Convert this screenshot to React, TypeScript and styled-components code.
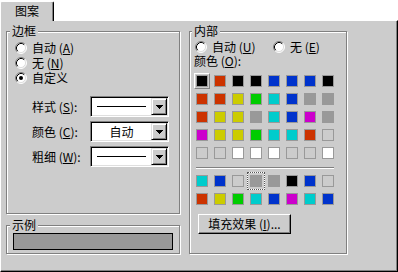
import React from 'react';
import styled, { createGlobalStyle } from 'styled-components';

const FACE = '#cccccc';

const GlobalStyle = createGlobalStyle`
  html, body { margin: 0; padding: 0; background: #fff; }
  body {
    font-family: "Noto Sans CJK SC", "Noto Sans", sans-serif;
    font-size: 12px;
    color: #000;
  }
  * { box-sizing: border-box; }
`;

const Dialog = styled.div`
  width: 398px;
  height: 272px;
  display: flex;
  flex-direction: column;
`;

const TabStrip = styled.div`
  height: 20px;
  padding-top: 1px;
  display: flex;
  align-items: flex-start;
`;

const Tab = styled.div`
  position: relative;
  z-index: 1;
  width: 54px;
  height: 20px;
  margin-bottom: -1px;
  background: ${FACE};
  border-left: 1px solid #fff;
  border-top: 1px solid #fff;
  border-right: 1px solid #000;
  border-top-left-radius: 2px;
  border-top-right-radius: 2px;
  box-shadow: inset -1px 0 0 #808080;
  padding-left: 14px;
  line-height: 17px;
`;

const Panel = styled.div`
  flex: 1;
  background: ${FACE};
  border-top: 1px solid #fff;
  border-left: 1px solid #fff;
  border-right: 1px solid #000;
  border-bottom: 1px solid #000;
  box-shadow: inset -1px -1px 0 #808080;
  padding: 10px 0 0 5px;
  display: flex;
  align-items: flex-start;
  gap: 9px;
`;

const Column = styled.div`
  width: 174px;
  display: flex;
  flex-direction: column;
  gap: 11px;
`;

const Group = styled.div<{ $h: number; $w?: number }>`
  position: relative;
  height: ${(p) => p.$h}px;
  width: ${(p) => (p.$w ? `${p.$w}px` : '100%')};
  border: 1px solid #808080;
  box-shadow: inset 1px 1px 0 #fff, 1px 1px 0 #fff;
  display: flex;
  flex-direction: column;
  align-items: flex-start;
`;

const Legend = styled.span<{ $left: number }>`
  position: absolute;
  top: -8px;
  left: ${(p) => p.$left}px;
  padding: 0 2px;
  background: ${FACE};
  line-height: 14px;
`;

const Key = styled.u`
  text-decoration: underline;
`;

const RadioList = styled.div`
  display: flex;
  flex-direction: column;
  padding: 8px 0 0 8px;
`;

const RadioRowLine = styled.div`
  display: flex;
  padding: 7px 0 0 5px;
`;

const RadioItem = styled.div<{ $w?: number }>`
  display: flex;
  align-items: center;
  gap: 5px;
  height: 15px;
  line-height: 15px;
  width: ${(p) => (p.$w ? `${p.$w}px` : 'auto')};
  white-space: nowrap;
`;

const FormRows = styled.div`
  display: flex;
  flex-direction: column;
  gap: 4px;
  margin-top: 11px;
  padding-left: 25px;
`;

const FormRow = styled.div`
  display: flex;
  align-items: center;
`;

const FieldLabel = styled.span`
  width: 58px;
  line-height: 14px;
  white-space: nowrap;
`;

const Combo = styled.div`
  width: 79px;
  height: 21px;
  display: flex;
  align-items: stretch;
  background: #fff;
  border: 1px solid;
  border-color: #808080 #fff #fff #808080;
  box-shadow: inset 1px 1px 0 #000, inset -1px -1px 0 #dfdfdf;
  padding: 1px;
`;

const ComboValue = styled.div`
  flex: 1;
  display: flex;
  align-items: center;
  justify-content: center;
  line-height: 14px;
`;

const LineSample = styled.div`
  width: 49px;
  height: 1px;
  background: #000;
`;

const DropButton = styled.div`
  width: 16px;
  height: 17px;
  background: ${FACE};
  border: 1px solid;
  border-color: #dfdfdf #000 #000 #dfdfdf;
  box-shadow: inset 1px 1px 0 #fff, inset -1px -1px 0 #808080;
  display: flex;
  align-items: center;
  justify-content: center;
`;

const SampleBar = styled.div`
  width: 160px;
  height: 17px;
  margin: 7px 0 0 6px;
  background: #999999;
  border: 1px solid #000;
`;

const ColorLabel = styled.div`
  padding-left: 4px;
  line-height: 14px;
  white-space: nowrap;
`;

const SwatchGrid = styled.div<{ $top: number }>`
  display: grid;
  grid-template-columns: repeat(8, 16px);
  grid-auto-rows: 16px;
  gap: 2px;
  margin: ${(p) => p.$top}px 0 0 4px;
`;

const Cell = styled.div<{ $selected?: boolean; $focused?: boolean }>`
  position: relative;
  width: 16px;
  height: 16px;
  display: flex;
  align-items: center;
  justify-content: center;
  border: 1px solid transparent;
  ${(p) =>
    p.$selected
      ? `border-color: #fff #808080 #808080 #fff;`
      : ''}
  ${(p) =>
    p.$focused
      ? `
    &::before {
      content: '';
      position: absolute;
      inset: -2px;
      border: 1px solid #fff;
    }
    &::after {
      content: '';
      position: absolute;
      inset: -2px;
      border: 1px dotted #555;
    }
  `
      : ''}
`;

const Swatch = styled.div<{ $color: string }>`
  position: relative;
  z-index: 1;
  width: 12px;
  height: 12px;
  border: 1px solid #999999;
  background: ${(p) => p.$color};
`;

const Separator = styled.div`
  width: 138px;
  height: 2px;
  margin: 6px 0 0 6px;
  border-top: 1px solid #808080;
  border-bottom: 1px solid #fff;
`;

const PushButton = styled.button`
  width: 93px;
  height: 20px;
  margin: 7px 0 0 8px;
  padding: 0;
  background: ${FACE};
  font: inherit;
  color: #000;
  line-height: 16px;
  border: 1px solid;
  border-color: #fff #000 #000 #fff;
  box-shadow: inset -1px -1px 0 #808080;
  white-space: nowrap;
`;

const Radio: React.FC<{ checked?: boolean }> = ({ checked }) => (
  <svg width="12" height="12" viewBox="0 0 12 12">
    <circle cx="6" cy="6" r="5" fill="#fff" />
    <path d="M2.11 9.89 A5.5 5.5 0 0 1 9.89 2.11" stroke="#808080" fill="none" />
    <path d="M9.89 2.11 A5.5 5.5 0 0 1 2.11 9.89" stroke="#fff" fill="none" />
    <path d="M2.82 9.18 A4.5 4.5 0 0 1 9.18 2.82" stroke="#000" fill="none" />
    <path d="M9.18 2.82 A4.5 4.5 0 0 1 2.82 9.18" stroke="#dfdfdf" fill="none" />
    {checked && <circle cx="6" cy="6" r="2" fill="#000" />}
  </svg>
);

const Arrow: React.FC = () => (
  <svg width="7" height="4" viewBox="0 0 7 4" shapeRendering="crispEdges">
    <rect x="0" y="0" width="7" height="1" fill="#000" />
    <rect x="1" y="1" width="5" height="1" fill="#000" />
    <rect x="2" y="2" width="3" height="1" fill="#000" />
    <rect x="3" y="3" width="1" height="1" fill="#000" />
  </svg>
);

const R = '#cc3300';
const Y = '#cccc00';
const G = '#00cc00';
const C = '#00cccc';
const B = '#0033cc';
const M = '#cc00cc';
const K = '#000000';
const D = '#999999';
const L = '#cccccc';
const W = '#ffffff';

const mainColors = [
  [K, R, K, K, B, B, B, K],
  [R, R, Y, G, C, B, D, D],
  [R, Y, Y, D, C, B, M, D],
  [M, Y, Y, G, C, C, R, L],
  [L, L, W, W, W, L, L, W],
];

const extraColors = [
  [C, B, L, D, D, K, B, L],
  [R, Y, G, C, B, M, C, B],
];

const StyleCombo: React.FC<{ children: React.ReactNode }> = ({ children }) => (
  <Combo>
    <ComboValue>{children}</ComboValue>
    <DropButton>
      <Arrow />
    </DropButton>
  </Combo>
);

export default function App() {
  return (
    <>
      <GlobalStyle />
      <Dialog>
        <TabStrip>
          <Tab>图案</Tab>
        </TabStrip>
        <Panel>
          <Column>
            <Group $h={183}>
              <Legend $left={3}>边框</Legend>
              <RadioList>
                <RadioItem>
                  <Radio />
                  <span>
                    自动 (<Key>A</Key>)
                  </span>
                </RadioItem>
                <RadioItem>
                  <Radio />
                  <span>
                    无 (<Key>N</Key>)
                  </span>
                </RadioItem>
                <RadioItem>
                  <Radio checked />
                  <span>自定义</span>
                </RadioItem>
              </RadioList>
              <FormRows>
                <FormRow>
                  <FieldLabel>
                    样式 (<Key>S</Key>):
                  </FieldLabel>
                  <StyleCombo>
                    <LineSample />
                  </StyleCombo>
                </FormRow>
                <FormRow>
                  <FieldLabel>
                    颜色 (<Key>C</Key>):
                  </FieldLabel>
                  <StyleCombo>自动</StyleCombo>
                </FormRow>
                <FormRow>
                  <FieldLabel>
                    粗细 (<Key>W</Key>):
                  </FieldLabel>
                  <StyleCombo>
                    <LineSample />
                  </StyleCombo>
                </FormRow>
              </FormRows>
            </Group>
            <Group $h={29}>
              <Legend $left={3}>示例</Legend>
              <SampleBar />
            </Group>
          </Column>
          <Group $h={223} $w={158}>
            <Legend $left={2}>内部</Legend>
            <RadioRowLine>
              <RadioItem $w={78}>
                <Radio />
                <span>
                  自动 (<Key>U</Key>)
                </span>
              </RadioItem>
              <RadioItem>
                <Radio />
                <span>
                  无 (<Key>E</Key>)
                </span>
              </RadioItem>
            </RadioRowLine>
            <ColorLabel>
              颜色 (<Key>O</Key>):
            </ColorLabel>
            <SwatchGrid $top={5}>
              {mainColors.flatMap((row, r) =>
                row.map((c, i) => (
                  <Cell key={`m${r}-${i}`} $selected={r === 0 && i === 0}>
                    <Swatch $color={c} />
                  </Cell>
                ))
              )}
            </SwatchGrid>
            <Separator />
            <SwatchGrid $top={4}>
              {extraColors.flatMap((row, r) =>
                row.map((c, i) => (
                  <Cell key={`e${r}-${i}`} $focused={r === 0 && i === 3}>
                    <Swatch $color={c} />
                  </Cell>
                ))
              )}
            </SwatchGrid>
            <PushButton>
              填充效果 (<Key>I</Key>)...
            </PushButton>
          </Group>
        </Panel>
      </Dialog>
    </>
  );
}
